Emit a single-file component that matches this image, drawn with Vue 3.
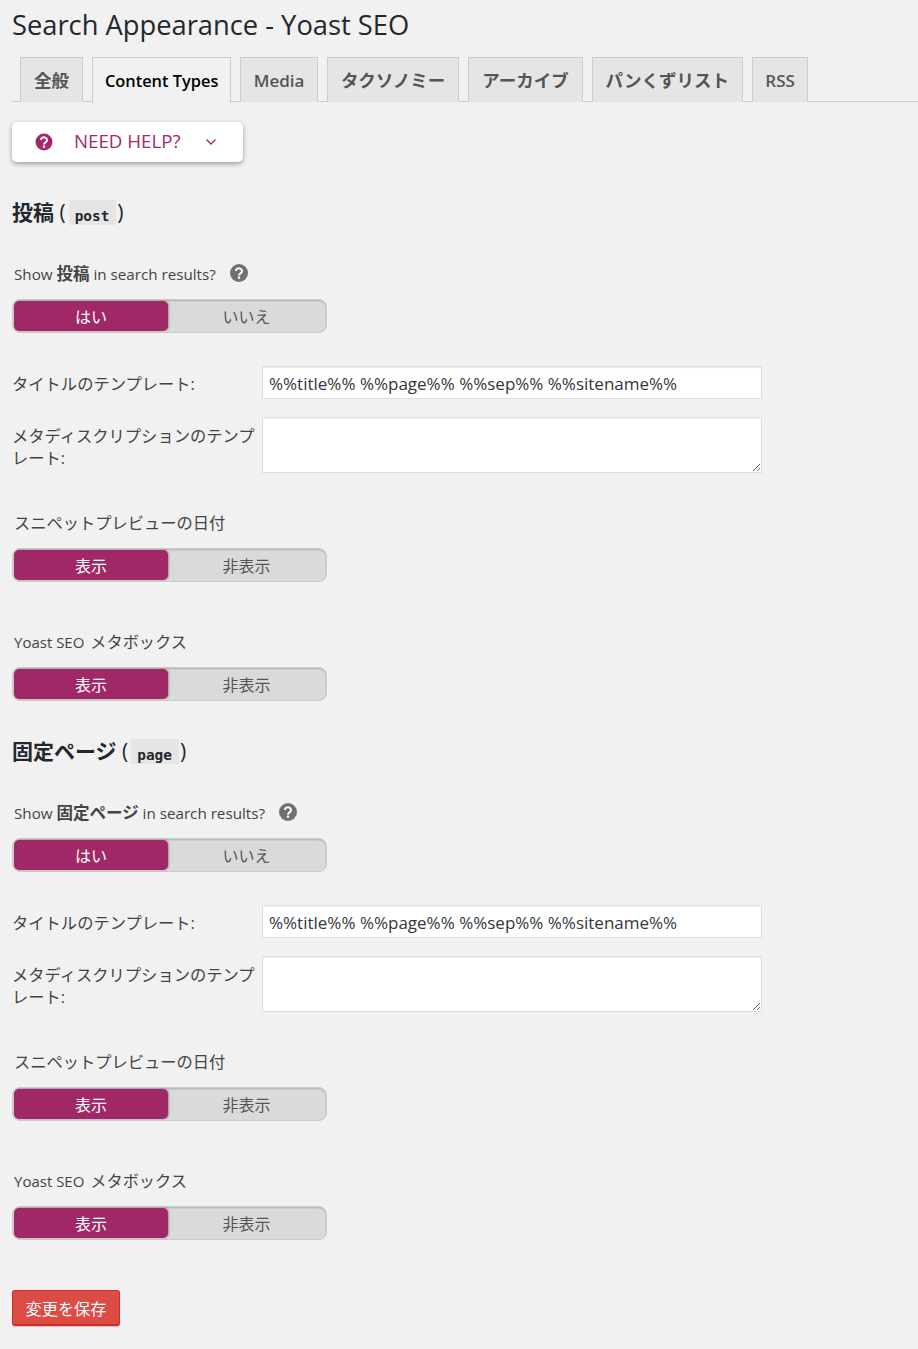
<script setup>
const tabs = [
  { label: '全般', kind: 'cjk' },
  { label: 'Content Types', kind: 'active' },
  { label: 'Media', kind: 'latin' },
  { label: 'タクソノミー', kind: 'cjk' },
  { label: 'アーカイブ', kind: 'cjk' },
  { label: 'パンくずリスト', kind: 'cjk' },
  { label: 'RSS', kind: 'latin' }
]
const sections = [
  { name: '投稿', code: 'post' },
  { name: '固定ページ', code: 'page' }
]
</script>

<template>
  <div class="wrap">
    <h1 class="title">Search Appearance - Yoast SEO</h1>
    <nav class="tabs">
      <a v-for="t in tabs" :key="t.label" class="tab" :class="t.kind">{{ t.label }}</a>
    </nav>
    <button class="help" type="button">
      <svg class="help-icon" viewBox="0 0 18 18" width="18" height="18">
        <circle cx="9" cy="9" r="8.500" fill="#a4286a" />
        <path d="M6 7a3 2.700 0 1 1 4.700 2.200c-1 .7-1.700 1.100-1.700 2.300" fill="none" stroke="#fff" stroke-width="2" />
        <rect x="7.900" y="12.500" width="2.200" height="2.200" fill="#fff" />
      </svg>
      <span class="help-text">NEED HELP?</span>
      <svg class="chev" viewBox="0 0 12 8" width="12" height="8">
        <path d="M1.500 1.500 6 6l4.500-4.500" fill="none" stroke="#a4286a" stroke-width="1.400" />
      </svg>
    </button>

    <section v-for="s in sections" :key="s.code" class="section">
      <h2 class="heading">{{ s.name }} <span class="paren">(</span><code class="code">{{ s.code }}</code><span class="paren close">)</span></h2>

      <div class="show-label">
        <span>Show <b>{{ s.name }}</b> in search results?</span>
        <svg class="q-icon" viewBox="0 0 18 18" width="18" height="18">
          <circle cx="9" cy="9" r="9" fill="#707070" />
          <path d="M6 7a3 2.700 0 1 1 4.700 2.200c-1 .7-1.700 1.100-1.700 2.300" fill="none" stroke="#fff" stroke-width="2" />
          <rect x="7.900" y="12.500" width="2.200" height="2.200" fill="#fff" />
        </svg>
      </div>
      <div class="toggle"><span class="on">はい</span><span class="off">いいえ</span></div>

      <div class="row first-row">
        <label class="row-label">タイトルのテンプレート:</label>
        <input class="field" type="text" value="%%title%% %%page%% %%sep%% %%sitename%%" />
      </div>
      <div class="row area-row">
        <label class="row-label">メタディスクリプションのテンプレート:</label>
        <textarea class="field area"></textarea>
      </div>

      <div class="plain-label date-label">スニペットプレビューの日付</div>
      <div class="toggle"><span class="on">表示</span><span class="off">非表示</span></div>

      <div class="plain-label box-label">Yoast SEO <span class="box-cjk">メタボックス</span></div>
      <div class="toggle"><span class="on">表示</span><span class="off">非表示</span></div>
    </section>

    <button class="save" type="button">変更を保存</button>
  </div>
</template>

<style>
html, body { background: #f1f1f1; }
</style>

<style scoped>
.wrap {
  box-sizing: border-box;
  width: 918px;
  height: 1349px;
  overflow: hidden;
  padding: 0 0 0 12px;
  background: #f1f1f1;
  color: #444;
  font-family: "Open Sans", "Noto Sans CJK JP", sans-serif;
  font-size: 15px;
}
.title {
  margin: 0;
  padding: 9px 0 0;
  height: 48px;
  box-sizing: border-box;
  font-size: 27.300px;
  line-height: 32px;
  font-weight: 400;
  color: #23282d;
}
.tabs {
  display: flex;
  gap: 8.900px;
  height: 45px;
  margin-top: 9px;
  padding-left: 8px;
  border-bottom: 1px solid #ccc;
  box-sizing: border-box;
}
.tab {
  box-sizing: border-box;
  height: 45px;
  background: #e5e5e5;
  border: 1px solid #ccc;
  border-bottom: 0;
  color: #555;
  font-weight: 600;
  line-height: 45px;
  white-space: nowrap;
}
.tab.cjk {
  padding: 0 13px;
  font-size: 17.500px;
}
.tab.latin {
  padding: 0 12.500px;
  font-size: 17px;
}
.tab.active {
  padding: 0 12px;
  background: #f1f1f1;
  color: #000;
  height: 46px;
  font-size: 16.400px;
}
.help {
  display: flex;
  align-items: center;
  box-sizing: border-box;
  width: 231px;
  height: 40px;
  margin-top: 20px;
  padding: 0 0 0 23px;
  background: #fff;
  border: 0;
  border-radius: 5px;
  box-shadow: 0 2px 5px rgba(0, 0, 0, .35);
  color: #a4286a;
  font-family: inherit;
  font-size: 18.700px;
}
.help-text { margin: 0 0 3px 21px; }
.chev { margin-left: 25px; }
.section { display: block; }
.heading {
  margin: 37px 0 0;
  height: 28px;
  font-size: 21px;
  line-height: 26px;
  font-weight: 600;
  color: #23282d;
  white-space: nowrap;
}
.paren { font-weight: 400; }
.close { margin-left: 1px; }
.code {
  display: inline-block;
  height: 25px;
  margin-left: 3px;
  padding: 0 7px 0 6px;
  background: #e5e5e5;
  font-family: "DejaVu Sans Mono", monospace;
  font-size: 14.400px;
  font-weight: 700;
  line-height: 32px;
  vertical-align: -1px;
}
.show-label {
  display: flex;
  align-items: center;
  gap: 14px;
  height: 24px;
  margin: 34px 0 0 2px;
  font-size: 15.200px;
}
.show-label b {
  font-size: 16.500px;
  font-weight: 700;
}
.toggle {
  display: flex;
  box-sizing: border-box;
  width: 315px;
  height: 34px;
  margin-top: 14px;
  padding: 1px;
  background: #dadada;
  border: 1px solid #ccc;
  border-radius: 8px;
  box-shadow: inset 0 1px 2px rgba(0, 0, 0, .2);
  font-size: 16px;
  line-height: 32px;
  text-align: center;
}
.on {
  width: 154px;
  background: #a12866;
  border-radius: 5px;
  box-shadow: 1px 0 2px rgba(0, 0, 0, .3);
  color: #fff;
}
.off { flex: 1; color: #555; }
.row {
  display: flex;
  align-items: flex-start;
}
.first-row { margin-top: 33px; }
.area-row { margin-top: 18px; }
.row-label {
  width: 250px;
  flex: none;
  font-size: 16.300px;
  line-height: 22px;
  padding-top: 8px;
  box-sizing: border-box;
}
.first-row .row-label { padding-top: 7px; }
.field {
  box-sizing: border-box;
  width: 500px;
  height: 33px;
  padding: 1px 6px 0;
  margin: 0;
  background: #fff;
  border: 1px solid #ddd;
  box-shadow: inset 0 1px 2px rgba(0, 0, 0, .07);
  color: #32373c;
  font-family: inherit;
  font-size: 17px;
  outline: none;
}
.area {
  height: 56px;
  display: block;
}
.plain-label {
  height: 24px;
  margin-left: 2px;
  font-size: 16.250px;
  line-height: 24px;
}
.date-label { margin-top: 38px; }
.box-label { margin-top: 48px; font-size: 15px; }
.box-cjk { margin-left: 2px; font-size: 16.200px; }
.date-label + .toggle { margin-top: 13px; }
.box-label + .toggle { margin-top: 13px; }
.save {
  display: block;
  box-sizing: border-box;
  width: 108px;
  height: 36px;
  margin-top: 50px;
  padding: 0;
  background: #dc4c45;
  border: 1px solid #c9302c;
  border-bottom-width: 2px;
  border-radius: 3px;
  box-shadow: 0 1px 0 rgba(201, 48, 44, .25);
  color: #fff;
  font-family: inherit;
  font-size: 16.200px;
}
</style>
